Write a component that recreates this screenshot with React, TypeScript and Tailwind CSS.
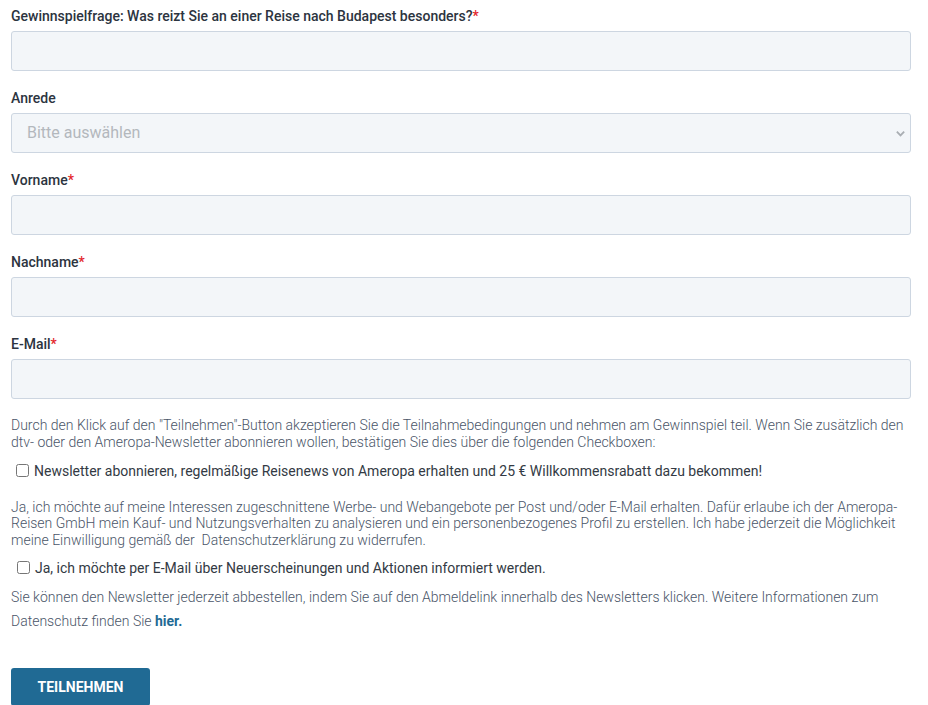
import React from 'react';

const inputCls =
  'block w-full h-10 rounded-[3px] border border-[#cdd6e1] bg-[#f3f6f9] px-[15px] text-base text-[#2c3440] outline-none';

const Label: React.FC<{ text: string; required?: boolean }> = ({ text, required }) => (
  <label className="block h-5 mb-[5px] text-sm leading-5 font-medium text-[#2c3440]">
    {text}
    {required && <span className="text-[#e3262b]">*</span>}
  </label>
);

export default function App() {
  return (
    <div className="bg-white min-h-[705px] font-['Roboto',sans-serif]">
      <form className="ml-[11px] w-[900px] pt-[6px]" onSubmit={(e) => e.preventDefault()}>
        {/* Gewinnspielfrage */}
        <div className="mb-[17px]">
          <Label text="Gewinnspielfrage: Was reizt Sie an einer Reise nach Budapest besonders?" required />
          <input type="text" className={inputCls} />
        </div>

        {/* Anrede */}
        <div className="mb-[17px]">
          <Label text="Anrede" />
          <div className="relative">
            <select className={`${inputCls} appearance-none text-[#b3b8bd]`} defaultValue="">
              <option value="" disabled>
                Bitte auswählen
              </option>
              <option>Frau</option>
              <option>Herr</option>
            </select>
            <svg
              className="absolute right-[5px] top-[15px] w-[11px] h-[11px] pointer-events-none"
              viewBox="0 0 12 12"
              fill="none"
              stroke="#a9aeb3"
              strokeWidth="2"
            >
              <path d="M2 4l4 4 4-4" />
            </svg>
          </div>
        </div>

        <div className="mb-[17px]">
          <Label text="Vorname" required />
          <input type="text" className={inputCls} />
        </div>

        <div className="mb-[17px]">
          <Label text="Nachname" required />
          <input type="text" className={inputCls} />
        </div>

        <div className="mb-[18px]">
          <Label text="E-Mail" required />
          <input type="email" className={inputCls} />
        </div>

        <p className="text-sm leading-[1.2] font-light text-[#4a5568]">
          Durch den Klick auf den "Teilnehmen"-Button akzeptieren Sie die Teilnahmebedingungen und nehmen am Gewinnspiel teil. Wenn Sie zusätzlich den dtv- oder den Ameropa-Newsletter abonnieren wollen, bestätigen Sie dies über die folgenden Checkboxen:
        </p>

        <label className="flex items-center gap-[5px] pl-[5px] mt-[10px] h-5 text-sm text-[#333a44]">
          <input type="checkbox" className="m-0 w-[13px] h-[13px]" />
          <span>Newsletter abonnieren, regelmäßige Reisenews von Ameropa erhalten und 25 € Willkommensrabatt dazu bekommen!</span>
        </label>

        <p className="mt-[18px] text-sm leading-[1.2] font-light text-[#4a5568]">
          Ja, ich möchte auf meine Interessen zugeschnittene Werbe- und Webangebote per Post und/oder E-Mail erhalten. Dafür erlaube ich der Ameropa-Reisen GmbH mein Kauf- und Nutzungsverhalten zu analysieren und ein personenbezogenes Profil zu erstellen. Ich habe jederzeit die Möglichkeit meine Einwilligung gemäß der&nbsp; <a href="#datenschutz">Datenschutzerklärung</a> zu widerrufen.
        </p>

        <label className="flex items-center gap-[5px] pl-[6px] mt-[9px] h-5 text-sm text-[#333a44]">
          <input type="checkbox" className="m-0 w-[13px] h-[13px]" />
          <span>Ja, ich möchte per E-Mail über Neuerscheinungen und Aktionen informiert werden.</span>
        </label>

        <p className="mt-[7px] text-sm leading-6 font-light text-[#4a5568]">
          Sie können den Newsletter jederzeit abbestellen, indem Sie auf den Abmeldelink innerhalb des Newsletters klicken. Weitere Informationen zum Datenschutz finden Sie{' '}
          <a href="#hier" className="font-bold text-[#1f6a94]">
            hier.
          </a>
        </p>

        <button
          type="submit"
          className="mt-[35px] w-[139px] h-[38px] rounded-[3px] bg-[#206a94] text-white text-sm font-bold uppercase"
        >
          Teilnehmen
        </button>
      </form>
    </div>
  );
}
